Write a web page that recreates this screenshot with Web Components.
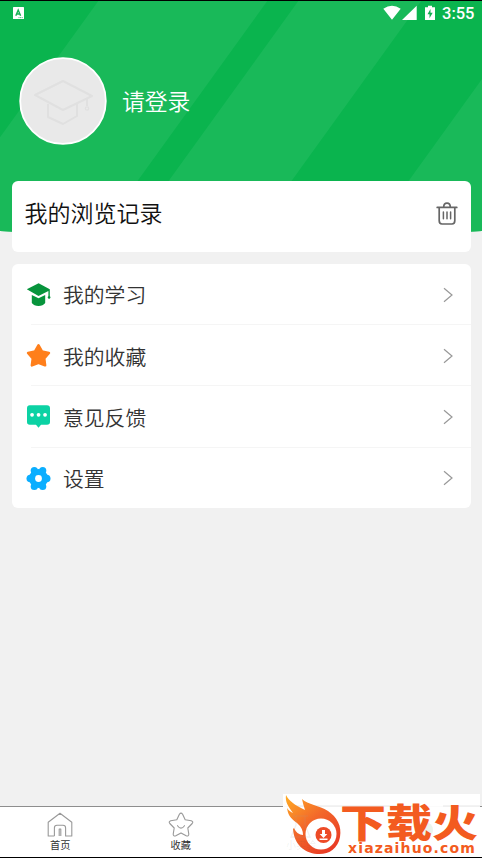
<!DOCTYPE html>
<html lang="zh-CN"><head><meta charset="utf-8"><title>我的</title>
<style>
html,body{margin:0;height:100%;overflow:hidden}
body{font-family:"Noto Sans CJK SC",sans-serif;background:#f1f1f1}
</style></head><body>
<app-screen></app-screen>
<script>
const define=(name,html)=>{
  const t=document.createElement('template');t.innerHTML=html;
  customElements.define(name,class extends HTMLElement{
    constructor(){super();this.attachShadow({mode:'open'}).append(t.content.cloneNode(true));}
  });
};
define('status-bar',`<style>
:host{display:flex;align-items:center;height:26px;padding:0 8px 0 13px;box-sizing:border-box;color:#fff;font:500 16.5px/25px Roboto,sans-serif}
svg{display:block}.gap{flex:1}
.signals{margin-bottom:1px}
span{width:32px;white-space:nowrap}
</style><svg width="11" height="12" viewBox="0 0 11 12"><rect width="11" height="12" rx=".6" fill="#fff"/><path d="M2.8 8.8 5.2 3l2.4 5.8M3.5 7h3.4" fill="none" stroke="#16b153" stroke-width="1.4"/><path d="M5.5 10.6h4.5" stroke="#16b153" stroke-width=".8" stroke-dasharray="1 .6"/></svg>
<div class="gap"></div>
<svg class="signals" width="59" height="18" viewBox="0 0 59 18" fill="#fff"><path d="M.3 4.7Q9-1.2 17.7 4.7L9 15.7ZM19 16 33.7 1.7V16ZM42 3.2h3V1.8h4v1.4h3V16H42Z"/><path d="M47.5 5 44.5 10.2h2v4l3.2-5.5h-2.2Z" fill="#12af50"/></svg><span>3:55</span>`);
define('profile-hero',`<style>
:host{display:grid;grid-template:181px 51px/1fr}
.bg{grid-area:1/1/3/2;width:100%;height:232px;display:block}
.content{grid-area:1/1;display:flex;flex-direction:column;z-index:1}
.row{display:flex;align-items:center;margin:31px 0 0 18.5px;gap:15.5px;color:#fff;font-size:22.8px;line-height:34px;font-weight:350}
.avatar{width:88px;height:88px;flex:none}
slot:not([name]){display:block;padding-bottom:1px}
</style>
<svg class="bg" viewBox="0 0 482 232"><defs><clipPath id="edge"><path d="M0 1H482V231Q241 244 0 231Z"/></clipPath></defs><g clip-path="url(#edge)"><path fill="#0ab44e" d="M0 0h482v240H0z"/><path fill="#19b959" d="M99 0H268L95 240H-74ZM299 0H422L249 240H126ZM539 0H710V240H366Z"/></g><path d="M0 0h482v1H0z"/></svg>
<div class="content"><slot name="status"></slot><div class="row">
<svg class="avatar" viewBox="0 0 88 88"><circle cx="44" cy="44" r="42.8" fill="#e9e9e9" stroke="#fff" stroke-width="1.8"/><g fill="none" stroke="#e0e0e0" stroke-width="2" stroke-linejoin="round"><path d="M16 38 44 24 73 39 44 53ZM29 47V60L44 67 58 59V47M68 41V49"/><circle cx="68" cy="51.5" r="1.7" stroke-width="1.2"/></g></svg>
<slot></slot></div></div>`);
define('history-card',`<style>
:host{display:flex;align-items:center;height:71px;box-sizing:border-box;margin:-51px 11px 0 12px;padding:0 13px 6px 12.5px;background:#fff;border-radius:6px;position:relative;z-index:2;color:#111;font-size:23px;line-height:34px;font-weight:350}
slot{display:block;padding-bottom:3px}
svg{margin-left:auto;width:22px;height:23px}
</style><slot></slot><svg viewBox="0 0 22 23" fill="none" stroke="#666" stroke-width="1.7" stroke-linecap="round" stroke-linejoin="round"><path d="M1.2 5.4H20.8M3.2 5.4V18.5Q3.2 22 6 22H16Q18.8 22 18.8 18.5V5.4M7.7 5Q7.7 1.2 11 1.2T14.3 5"/><path d="M7.4 10v6.7M11 10v6.7M14.6 10v6.7" stroke-width="1.5"/></svg>`);
define('menu-card',`<style>:host{display:block;margin:12px 11px 0 12px;background:#fff;border-radius:6px;height:244px;overflow:hidden}</style><slot></slot>`);
define('menu-row',`<style>
:host{display:flex;align-items:center;height:61.2px;box-sizing:border-box;padding:0 17px 0 14px;color:#333;font-size:20.8px;line-height:30px;font-weight:350;background:linear-gradient(#f5f5f5,#f5f5f5) 19px 100%/100% 1px no-repeat}
::slotted(svg){width:25px;height:25px;margin-right:12px;flex:none}
slot:not([name]){display:block;padding-bottom:.4px}
.arrow{margin-left:auto;width:12px;height:16px}
</style><slot name="icon"></slot><slot></slot><svg class="arrow" viewBox="0 0 12 16"><path d="m2 1.2 8 6.8-8 6.8" fill="none" stroke="#999" stroke-width="1.2"/></svg>`);
define('nav-item',`<style>
:host{display:flex;flex-direction:column;align-items:center;width:120.5px;color:#333;font-size:10.2px;line-height:14px}
::slotted(svg){display:block;width:26px;height:25px;margin:5px 0 1px}
</style><slot name="icon"></slot><slot></slot>`);
define('bottom-nav',`<style>:host{display:flex;height:50px;border-top:1px solid #8e8e8e;border-bottom:1px solid #000;background:#fff;position:relative}</style><slot></slot>`);
define('site-watermark',`<style>
:host{position:absolute;left:283px;top:794px;width:197px;height:63px;background:#fffffff5;overflow:hidden;z-index:5;font-family:"Noto Sans CJK SC",sans-serif}
svg{position:absolute;inset:0}
.old{position:absolute;left:3px;top:43px;color:#60504018;font-size:10px;line-height:16px}
.brand{position:absolute;left:57px;top:5px;color:#f35b20;font-weight:900;font-size:46px;line-height:42px;transform:scaleY(.83);white-space:nowrap}
.url{position:absolute;left:65px;top:47px;color:#f35b20;font:bold 14px/14px "DejaVu Sans","Liberation Sans",sans-serif;letter-spacing:1.15px;white-space:nowrap}
</style>
<svg width="197" height="63" viewBox="0 0 197 63"><defs><linearGradient id="f" x1="0" y1="0" x2=".75" y2="1"><stop stop-color="#ffad24"/><stop offset=".5" stop-color="#f3682a"/><stop offset="1" stop-color="#e93b25"/></linearGradient></defs><path d="M12 12H140M160 12H197" stroke="#ddd" stroke-width=".7"/>
<path fill="url(#f)" d="M3 1C6 7 12 11 20 15L22 16Q20 10 19 5C25 11 36 11 45 17C54 23 59 32 57 43C55 55 45 61 34 60C21 59 11 50 10 35L11 34Q14 41 20 41Q20 34 14 29C6 23 5 20 4 14C6 17 8 18 10 19C5 12 2 8 3 1Z"/>
<circle cx="38" cy="40" r="15.5" fill="#fff"/><circle cx="40.5" cy="41" r="8" fill="#ed4b27"/><path d="M39 36h3v4h2.3l-3.8 4-3.8-4H39ZM36.5 44.5h8v1.5h-8Z" fill="#fff"/><path d="M10 22h15M13 22v9L8 43h19L22 31V22" fill="none" stroke="#a99" stroke-opacity=".14" stroke-width="1.3"/><circle cx="142" cy="36" r="8" fill="#54aa68" opacity=".12"/></svg>
<span class="old">小实验</span><span class="brand">下载火</span><span class="url">xiazaihuo.com</span>`);
define('app-screen',`<style>
:host{display:flex;flex-direction:column;width:482px;height:858px;background:#f1f1f1;position:relative;overflow:hidden}
bottom-nav{margin-top:auto}
</style>
<profile-hero><status-bar slot="status"></status-bar><span>请登录</span></profile-hero>
<history-card>我的浏览记录</history-card>
<menu-card>
<menu-row><svg slot="icon" viewBox="0 0 25 25" fill="#07943c"><path d="m.8 7.3 11.8-6 11.2 6v7a1.3 1.3 0 1 1-1.4 0V9L12.5 14Z"/><path d="M5.8 13 12.5 16.2 19.2 13V21Q17 24 12.5 24T5.8 21Z"/></svg>我的学习</menu-row>
<menu-row><svg slot="icon" viewBox="0 0 25 25"><path fill="#ff7f1b" stroke="#ff7f1b" stroke-width="2.6" stroke-linejoin="round" d="m12.5 2.3 3.4 6.2 7 1.4-4.7 5.4.9 7-6.6-2.6-6.6 2.6.9-7-4.7-5.4 7-1.4Z"/></svg>我的收藏</menu-row>
<menu-row><svg slot="icon" viewBox="0 0 25 25"><path fill="#0cd2a4" d="M3.8 1.2H21Q24 1.2 24 4.2V18Q24 20.8 21 20.8H15L12.5 23.8 10 20.8H3.8Q1 20.8 1 18V4.2Q1 1.2 3.8 1.2Z"/><path d="M6 10.8h.1M12.5 10.8h.1M19 10.8h.1" stroke="#fff" stroke-width="3.7" stroke-linecap="round"/></svg>意见反馈</menu-row>
<menu-row><svg slot="icon" viewBox="0 0 25 25"><g fill="#0baeff"><circle cx="12.5" cy="12.5" r="9.6"/><circle cx="8.3" cy="4.5" r="3.6"/><circle cx="16.7" cy="4.5" r="3.6"/><circle cx="4.3" cy="12.5" r="3.8"/><circle cx="20.7" cy="12.5" r="3.8"/><circle cx="8.3" cy="20.5" r="3.6"/><circle cx="16.7" cy="20.5" r="3.6"/></g><circle cx="12.5" cy="12.5" r="3.4" fill="#fff"/></svg>设置</menu-row>
</menu-card>
<bottom-nav>
<nav-item><svg slot="icon" viewBox="0 0 26 25" fill="none" stroke="#999" stroke-width="1.1" stroke-linejoin="round"><path d="M7.4 24H1.2V10.2L13 1.2 24.8 10.2V24H18.6V16Q18.6 13.3 16 13.3H10Q7.4 13.3 7.4 16V24M12.2 24V17h1.6v7"/></svg>首页</nav-item>
<nav-item><svg slot="icon" viewBox="0 0 26 25" fill="none" stroke="#999" stroke-width="1.1" stroke-linejoin="round" stroke-linecap="round"><path d="M11.4 2.2Q13 0 14.6 2.2L17.2 7.8 23.3 8.7Q25.7 9.6 24.2 11.5L19.8 16 20.8 22.2Q20.6 24.8 18.2 23.7L13 20.9 7.8 23.7Q5.4 24.8 5.2 22.2L6.2 16 1.8 11.5Q.3 9.6 2.7 8.7L8.8 7.8ZM9.5 13.7Q13 18.5 16.5 13.7"/></svg>收藏</nav-item>
</bottom-nav><site-watermark></site-watermark>`);
</script></body></html>
